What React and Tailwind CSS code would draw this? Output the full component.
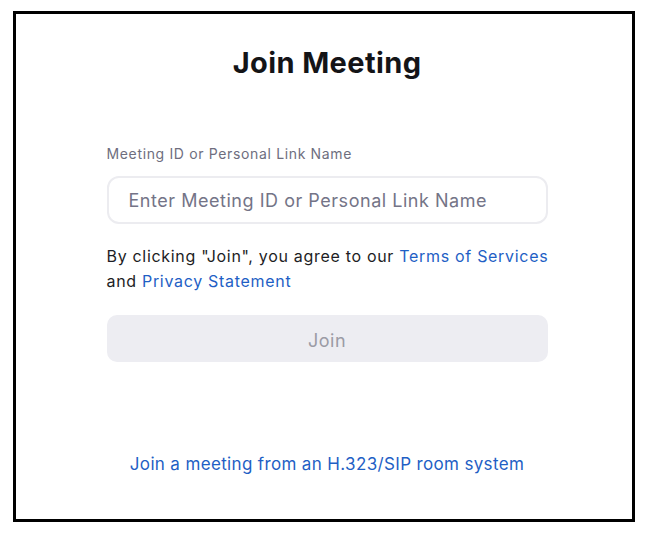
export default function App() {
  return (
    <div className="w-[649px] h-[533px] bg-white pt-[11px] pl-[13px]" style={{ fontFamily: 'Inter, "Noto Sans", sans-serif' }}>
      <div className="w-[622px] h-[511px] border-[3px] border-black bg-white flex flex-col items-center">
        <h1 className="mt-[31px] ml-[6px] text-[29px] leading-[36px] font-bold text-[#141417] tracking-[0.4px]">Join Meeting</h1>
        <div className="w-[441px] mt-[63px] ml-[6px] flex flex-col">
          <label className="text-[14px] leading-[20px] text-[#6e6e7e] tracking-[0.65px] whitespace-nowrap">Meeting ID or Personal Link Name</label>
          <div className="mt-[12px] h-[48px] rounded-[12px] border-2 border-[#ececf0] flex items-center px-[20px]">
            <span className="text-[18px] text-[#747487] tracking-[0.53px] whitespace-nowrap">Enter Meeting ID or Personal Link Name</span>
          </div>
          <p className="mt-[20px] text-[16px] leading-[25px] text-[#1d1d24] tracking-[0.69px] whitespace-nowrap">
            By clicking "Join", you agree to our <span className="text-[#1f5fc5]">Terms of Services</span>
            <br />
            and <span className="text-[#1f5fc5]">Privacy Statement</span>
          </p>
          <div className="mt-[21px] h-[47px] rounded-[10px] bg-[#ededf2] flex items-center justify-center">
            <span className="text-[18px] text-[#9b9ba5] tracking-[0.5px] mt-[3px]">Join</span>
          </div>
          <div className="mt-[90px] text-center text-[17px] text-[#1f5fc5] tracking-[0.35px] whitespace-nowrap">Join a meeting from an H.323/SIP room system</div>
        </div>
      </div>
    </div>
  );
}
